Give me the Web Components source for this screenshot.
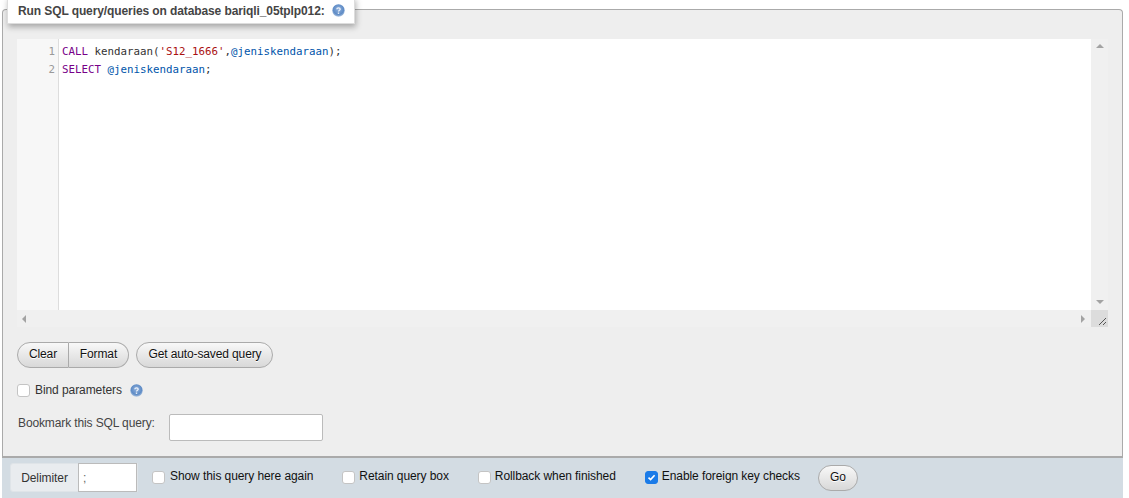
<!DOCTYPE html>
<html><head><meta charset="utf-8"><style>
html,body{margin:0;padding:0;background:#fff;overflow:hidden}
body{font:12px "Liberation Sans",Arial,sans-serif;color:#444;letter-spacing:-.08px}
</style></head><body>
<pma-query-page></pma-query-page>
<script>
let hid=0;
function help(){const id="hg"+(++hid);return `<svg width="13" height="13" viewBox="0 0 13 13" aria-hidden="true"><defs><radialGradient id="${id}" cx="50%" cy="40%" r="60%"><stop offset="0" stop-color="#8fb0dc"/><stop offset=".7" stop-color="#5f8cc6"/><stop offset="1" stop-color="#a9c1df"/></radialGradient></defs><circle cx="6.5" cy="6.5" r="6.2" fill="url(#${id})"/><path d="M4.8 5.2C4.9 3.4 8.2 3.5 8.2 5.2 8.2 6.3 6.5 6.3 6.5 7.6" fill="none" stroke="#eef3fa" stroke-width="1.3"/><rect x="5.8" y="8.5" width="1.4" height="1.4" fill="#eef3fa"/></svg>`;}
function def(name,html){customElements.define(name,class extends HTMLElement{constructor(){super();this.attachShadow({mode:"open"}).innerHTML=typeof html==="function"?html():html;}});}

def("pma-help",()=>`<style>:host{display:inline-flex;width:13px;height:13px}svg{display:block}</style>${help()}`);

def("pma-button",`<style>:host{display:inline-flex;align-items:center;justify-content:center;box-sizing:border-box;height:26px;padding:0 0 2px;border:1px solid #aaa;border-radius:13px;background:linear-gradient(#f8f8f8,#d8d8d8);color:#111;font:12px "Liberation Sans",Arial,sans-serif;letter-spacing:-.12px;text-shadow:0 1px 0 #fff}</style><slot></slot>`);

def("pma-check",`<style>:host{display:inline-flex;align-items:center;gap:var(--gap,5px);color:var(--lc,#333)}
.b{box-sizing:border-box;width:13px;height:13px;border:1px solid #c4c4c4;border-radius:3px;background:#fff;display:block}
:host([checked]) .b{background:#1a7be8;border-color:#1a7be8}
svg{display:none;width:11px;height:11px}
:host([checked]) svg{display:block}
.t{position:relative;top:-1px}
</style><span class="b"><svg viewBox="0 0 11 11"><path d="M2.5 5.6 4.6 7.6 8.6 3.2" fill="none" stroke="#fff" stroke-width="1.6"/></svg></span><span class="t"><slot></slot></span>`);

def("pma-legend",`<style>:host{position:absolute;left:4px;top:-13px;box-sizing:border-box;width:348px;height:27px;display:flex;align-items:center;gap:7px;padding:0 0 0 10px;background:#fff;border:1px solid #ddd;box-shadow:1px 3px 6px rgba(0,0,0,.3);font:bold 12px "Liberation Sans",Arial,sans-serif;letter-spacing:-.1px;color:#444}
</style><span><slot></slot></span><pma-help></pma-help>`);

def("pma-editor",`<style>:host{display:grid;grid-template-columns:42px 1fr 17px;grid-template-rows:271px 17px;height:288px;background:#fff;font:10.8px/18px "DejaVu Sans Mono",monospace;letter-spacing:0;color:#333}
.gut{background:#f7f7f7;border-right:1px solid #ddd;text-align:right;padding:4px 3px 0 0;color:#999;box-sizing:border-box}
.code{padding:4px 0 0 3px;white-space:pre}
.k{color:#708}.v{color:#05a}.s{color:#a11}
.vs,.hs{background:#f0f0f0;position:relative}
.cor{background:#dcdcdc;position:relative}
.hs{grid-column:1 / 3}
.a{position:absolute;width:0;height:0;border:4px solid transparent}
.up{left:4.5px;top:5px;border-top:0;border-bottom-color:#a3a3a3}
.dn{left:4.5px;bottom:6px;border-bottom:0;border-top-color:#a3a3a3}
.lf{left:5px;top:4.5px;border-left:0;border-right-color:#a3a3a3}
.rt{right:6px;top:4.5px;border-right:0;border-left-color:#a3a3a3}
svg{position:absolute;left:0;top:0}
</style><div class="gut">1<br>2</div><div class="code"><span class="k">CALL</span> kendaraan(<span class="s">'S12_1666'</span>,<span class="v">@jeniskendaraan</span>);
<span class="k">SELECT</span> <span class="v">@jeniskendaraan</span>;</div><div class="vs"><i class="a up"></i><i class="a dn"></i></div><div class="hs"><i class="a lf"></i><i class="a rt"></i></div><div class="cor"><svg width="17" height="17"><path d="M8 15 15 8M12 15 15 12" stroke="#555" fill="none"/></svg></div>`);

def("pma-toolbar",`<style>:host{display:flex;align-items:center;gap:7px;height:26px}
.g{display:flex}
.g pma-button:first-child{border-radius:13px 0 0 13px;width:52px}
.g pma-button:last-child{border-radius:0 13px 13px 0;border-left:0;width:60px}
.q{width:137px;padding-left:1px}
</style><div class="g"><pma-button>Clear</pma-button><pma-button>Format</pma-button></div><pma-button class="q">Get auto-saved query</pma-button>`);

def("pma-footer",`<style>:host{display:flex;align-items:center;box-sizing:border-box;height:42px;background:#d3dce3;border-top:2px solid #aaa;padding:0 0 0 8px;--lc:#111}
.d{display:flex;height:29px;margin-top:-1px;box-sizing:border-box;border:1px solid #dfe4e8;border-radius:3px 0 0 3px;background:#e9ecef;align-items:stretch;color:#333}
.d b{font-weight:normal;width:67px;display:flex;align-items:center;justify-content:center}
.d span{width:59px;box-sizing:border-box;background:#fff;border:1px solid #bbb;margin:-1px 0;padding:0 0 0 4px;display:flex;align-items:center;color:#666}
pma-check{margin-top:-2px}
pma-check:nth-of-type(1){margin-left:14px}
pma-check:nth-of-type(n+2){margin-left:29px;--gap:4px}
pma-button{margin-left:18px;width:40px}
</style><div class="d"><b>Delimiter</b><span>;</span></div>
<pma-check>Show this query here again</pma-check><pma-check>Retain query box</pma-check><pma-check>Rollback when finished</pma-check><pma-check checked>Enable foreign key checks</pma-check><pma-button>Go</pma-button>`);

def("pma-query-page",`<style>:host{display:block;padding:9px 6px 0 2px;height:489px;position:relative}
.fs{position:relative;display:flex;flex-direction:column;box-sizing:border-box;height:447px;background:#eee;border:1px solid #aaa;border-bottom:0;border-radius:4px 4px 0 0;padding:29px 14px 0 14px}
pma-editor{flex:none}
pma-toolbar{margin-top:15px}
.bind{display:flex;align-items:center;gap:8px;margin-top:16px;height:13px}
.bm{display:flex;align-items:center;margin-top:17px;height:27px;color:#444}
.bm label{width:152px;position:relative;top:-5px;left:1px;letter-spacing:-.12px}
.in{box-sizing:border-box;width:154px;height:27px;background:#fff;border:1px solid #bbb;border-radius:2px}
</style><div class="fs"><pma-legend>Run SQL query/queries on database bariqli_05tplp012:</pma-legend>
<pma-editor></pma-editor><pma-toolbar></pma-toolbar>
<div class="bind"><pma-check>Bind parameters</pma-check><pma-help></pma-help></div>
<div class="bm"><label>Bookmark this SQL query:</label><div class="in"></div></div></div>
<pma-footer></pma-footer>`);
</script></body></html>
